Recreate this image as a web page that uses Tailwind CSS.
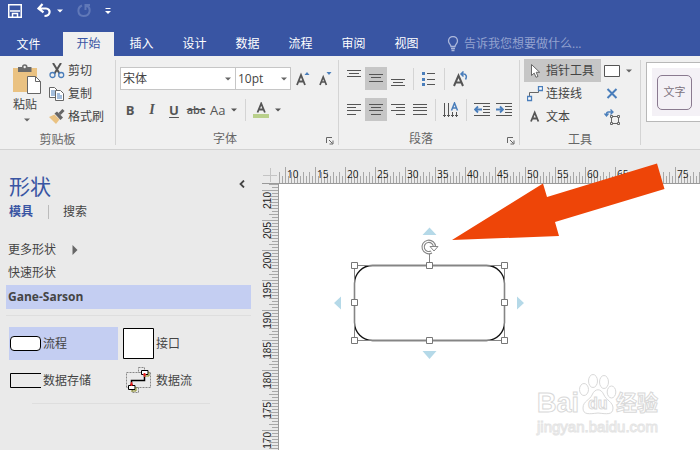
<!DOCTYPE html>
<html lang="zh-CN">
<head>
<meta charset="utf-8">
<meta name="viewport" content="width=device-width, initial-scale=1">
<title>Visio</title>
<script src="https://cdn.jsdelivr.net/npm/@tailwindcss/browser@4"></script>
</head>
<body class="flex min-h-screen flex-col overflow-hidden bg-[#eaeaea] font-['Open_Sans','Noto_Sans_CJK_SC',sans-serif] text-xs leading-4 text-[#444]">

<svg class="hidden" aria-hidden="true">
  <symbol id="caret" viewBox="0 0 6 4"><path d="M0 .5h6L3 3.5z" fill="currentColor"/></symbol>
  <symbol id="launcher" viewBox="0 0 8 8"><path d="M.5 6V.5H6M3 3l3.500 3.500M7 3.500V7H3.500" fill="none" stroke="currentColor"/></symbol>
</svg>

<header class="bg-[#3955a3] text-white">
  <div class="flex h-8 items-start pt-[3px] pl-2">
    <button aria-label="保存" class="h-4 w-[14px]"><svg class="h-4 w-[14px]" viewBox="0 0 14 16" fill="none" stroke="#fff" stroke-width="1.500"><path d="M.75 1.750h12.500v12.500H.75zM2 8h10M4.500 14v-3.500h5v3.500"/></svg></button>
    <button aria-label="撤消" class="ml-[15px] flex h-4 items-center gap-[6px]"><svg class="h-4 w-[14px]" viewBox="0 0 14 16" fill="none" stroke="#fff" stroke-width="2.200"><path d="M5.500 1 1.500 5.500l5 3.800M2 5.500h7c5 0 5 7.500-1.500 7.500"/></svg><svg class="h-1 w-[6px]"><use href="#caret"/></svg></button>
    <button aria-label="恢复" class="ml-[14px] h-4 w-[14px]"><svg class="h-4 w-[14px]" viewBox="0 0 14 16" fill="none" stroke="#6078b8" stroke-width="2"><path d="M5 2.500C0 4.500 0 12.500 6.500 13 13.500 13 14.500 5 9.500 2.500M8.500 7V2H13"/></svg></button>
    <button aria-label="自定义快速访问工具栏" class="ml-[14px] h-4 w-[6px]"><svg class="h-4 w-[6px]" viewBox="0 0 6 16"><path d="M.5 5.500h5" stroke="#fff"/><path d="M0 8h6L3 11z" fill="#fff"/></svg></button>
  </div>
  <div class="flex h-6 items-stretch">
    <nav class="flex gap-[2px]">
      <button class="w-[61px] pr-1 pt-px">文件</button>
      <button class="w-[51px] bg-[#f0f0f0] pb-px text-[#3955a3]">开始</button>
      <button class="w-[51px] pb-px">插入</button>
      <button class="w-[51px] pb-px">设计</button>
      <button class="w-[51px] pb-px">数据</button>
      <button class="w-[51px] pb-px">流程</button>
      <button class="w-[51px] pb-px">审阅</button>
      <button class="w-[51px] pb-px">视图</button>
    </nav>
    <label class="ml-[15px] flex min-w-0 flex-1 items-center gap-[5px]">
      <svg class="h-4 w-3 shrink-0" viewBox="0 0 12 16" fill="none" stroke="#aab6da" stroke-width="1.300"><path d="M4 10.500C4 8.500 1.500 7.500 1.500 5a4.500 4.500 0 0 1 9 0C10.500 7.500 8 8.500 8 10.500zM4 12.500h4M4.500 14.500h3"/></svg>
      <input aria-label="告诉我您想要做什么" placeholder="告诉我您想要做什么..." class="w-full min-w-0 bg-transparent outline-none placeholder:text-[#93a2cf]">
    </label>
  </div>
</header>

<section class="flex h-[94px] shrink-0 border-b border-[#d2d2d2] bg-[#f0f0f0]">
  <div class="flex w-[115px] shrink-0 flex-col pt-[3px]">
    <div class="flex h-[69px] gap-2 pl-3">
      <button class="flex flex-col items-start pt-[5px]">
        <svg class="h-[30px] w-[29px]" viewBox="0 0 29 30"><path d="M1 4h24v24H1z" fill="#eac282"/><path d="M6 8V3h4a2.500 2.500 0 0 1 5.500 0h4v5z" fill="#6a6a6a"/><circle cx="12.700" cy="3" r="1.200" fill="#f0f0f0"/><path d="M15.500 12.500h8l5 5v12h-13z" fill="#fff" stroke="#666"/><path d="M23.500 12.500v5h5" fill="none" stroke="#666"/></svg>
        <span class="mt-[3px] pl-px">粘贴</span>
        <svg class="ml-3 mt-[5px] h-1 w-[6px] text-[#666]"><use href="#caret"/></svg>
      </button>
      <div class="grid grid-rows-3">
        <button class="flex items-center gap-[3px]"><svg class="size-4" viewBox="0 0 16 16" fill="none"><path d="M4 0l6.500 10.500M12 0 5.500 10.500" stroke="#555" stroke-width="2"/><circle cx="3.500" cy="12" r="2.500" stroke="#4a7ebb" stroke-width="1.300"/><circle cx="12.200" cy="12" r="2.500" stroke="#4a7ebb" stroke-width="1.300"/></svg>剪切</button>
        <button class="flex items-center gap-[3px]"><svg class="size-4" viewBox="0 0 16 16" fill="#fff" stroke="#666"><path d="M.5 1.500h5l3 3v7h-8z"/><path d="M2 5h4M2 7h4M2 9h4" stroke="#4a7ebb"/><path d="M6.500 4.500h5l3 3v7h-8z"/><path d="M8 8h3M8 10h5M8 12h5" stroke="#4a7ebb"/></svg>复制</button>
        <button class="flex items-center gap-[3px]"><svg class="size-4" viewBox="0 0 16 16"><path d="m0 8 5.500-2.500 5 5L7 15z" fill="#eac282"/><path d="m5.500 4.500 2.500-2 6 6-2.500 2.500z" fill="#666"/><path d="m10.500 5 4-4" stroke="#666" stroke-width="3"/></svg>格式刷</button>
      </div>
    </div>
    <div class="pt-1 text-center text-[#666]">剪贴板</div>
  </div>
  <div class="my-1 w-px shrink-0 bg-[#d4d4d4]"></div>

  <div class="flex w-[222px] shrink-0 flex-col pt-[11px]">
    <div class="flex h-[23px] items-center pl-1">
      <label class="relative"><select aria-label="字体" class="block h-[23px] w-[116px] appearance-none border border-[#c6c6c6] bg-white pl-[2px]"><option>宋体</option></select><svg class="pointer-events-none absolute top-[10px] right-[5px] h-1 w-[6px] text-[#666]"><use href="#caret"/></svg></label>
      <label class="relative -ml-px"><select aria-label="字号" class="block h-[23px] w-14 appearance-none border border-[#c6c6c6] bg-white pl-[2px]"><option>10pt</option></select><svg class="pointer-events-none absolute top-[10px] right-1 h-1 w-[6px] text-[#666]"><use href="#caret"/></svg></label>
      <button aria-label="增大字号" class="ml-[5px] h-4 w-[14px]"><svg class="h-4 w-[14px]" viewBox="0 0 14 16"><path d="m1 14 4-10 4 10M2.500 10.500h5" fill="none" stroke="#555" stroke-width="1.800"/><path d="M8.500 4h5l-2.500-3z" fill="#4a7ebb"/></svg></button>
      <button aria-label="减小字号" class="ml-[9px] h-4 w-[14px]"><svg class="h-4 w-[14px]" viewBox="0 0 14 16"><path d="m1 14 3.200-8 3.200 8M2.500 11h3.500" fill="none" stroke="#555" stroke-width="1.700"/><path d="M7.500 1h5L10 4z" fill="#4a7ebb"/></svg></button>
    </div>
    <div class="mt-2 flex h-[23px] items-center pl-[3px] text-[13px] text-[#555]">
      <button class="w-[22px] font-bold">B</button>
      <button class="w-[22px] font-['Liberation_Serif',serif] text-sm font-bold italic">I</button>
      <button class="w-[22px] font-bold underline underline-offset-2">U</button>
      <button class="w-[22px] text-[11px] font-semibold line-through">abc</button>
      <button class="ml-[3px] flex items-center gap-[6px]">Aa<svg class="h-1 w-[6px]"><use href="#caret"/></svg></button>
      <span class="ml-2 h-[22px] w-px bg-[#d4d4d4]"></span>
      <button aria-label="字体颜色" class="ml-[7px] flex items-center gap-[6px]"><svg class="size-4" viewBox="0 0 16 16"><path d="m4.500 10.500 3.700-9 3.700 9M6 7.500h4.500" fill="none" stroke="#555" stroke-width="1.800"/><path d="M0 12h16v4H0z" fill="#b9d08b"/></svg><svg class="h-1 w-[6px]"><use href="#caret"/></svg></button>
    </div>
    <div class="relative pt-[10px] pr-1 text-center text-[#666]">字体<button aria-label="字体设置" class="absolute top-4 right-1 size-2"><svg class="size-2"><use href="#launcher"/></svg></button></div>
  </div>
  <div class="my-1 w-px shrink-0 bg-[#d4d4d4]"></div>

  <div class="flex w-[180px] shrink-0 flex-col pt-[11px]">
    <div class="flex h-[23px] items-center pl-1">
      <button aria-label="顶端对齐" class="flex h-[23px] w-[22px] justify-center"><svg class="h-[23px] w-[14px]" viewBox="0 0 14 23" stroke="#555"><path d="M0 3.500h14M2 6.500h10M0 9.500h14"/></svg></button>
      <button aria-label="中部对齐" class="flex h-[23px] w-[22px] justify-center bg-[#c6c6c6]"><svg class="h-[23px] w-[14px]" viewBox="0 0 14 23" stroke="#555"><path d="M0 7.500h14M2 10.500h10M0 14.500h14"/></svg></button>
      <button aria-label="底端对齐" class="flex h-[23px] w-[22px] justify-center"><svg class="h-[23px] w-[14px]" viewBox="0 0 14 23" stroke="#555"><path d="M0 12.500h14M2 15.500h10M0 18.500h14"/></svg></button>
      <span class="ml-1 h-[22px] w-px bg-[#d4d4d4]"></span>
      <button aria-label="项目符号" class="ml-2 w-[14px]"><svg class="size-[14px]" viewBox="0 0 14 14"><path d="M5 1.500h8M5 7.500h8M5 12.500h8" stroke="#555"/><path d="M0 0h3v3H0zM0 6h3v3H0zM0 11h3v3H0z" fill="#4a7ebb"/></svg></button>
      <span class="ml-2 h-[22px] w-px bg-[#d4d4d4]"></span>
      <button aria-label="旋转文本" class="ml-2 w-[15px]"><svg class="h-4 w-[15px]" viewBox="0 0 15 16" fill="none"><path d="m1 15 4.500-10.500L10 15M2.800 11.500h5.500" stroke="#555" stroke-width="2"/><path d="M8.500 3h2c3 0 3.500 3 2 5.500M10.500.5 8 3l2.500 2.500" stroke="#4a7ebb" stroke-width="1.500"/></svg></button>
    </div>
    <div class="mt-2 flex h-[23px] items-center pl-1">
      <button aria-label="左对齐" class="flex h-[23px] w-[22px] justify-center"><svg class="h-[23px] w-[14px]" viewBox="0 0 14 23" stroke="#555"><path d="M0 6.500h14M0 9.500h9M0 12.500h14M0 16.500h9"/></svg></button>
      <button aria-label="居中" class="flex h-[23px] w-[22px] justify-center bg-[#c6c6c6]"><svg class="h-[23px] w-[14px]" viewBox="0 0 14 23" stroke="#555"><path d="M0 6.500h14M2 9.500h10M0 12.500h14M2 16.500h10"/></svg></button>
      <button aria-label="右对齐" class="flex h-[23px] w-[22px] justify-center"><svg class="h-[23px] w-[14px]" viewBox="0 0 14 23" stroke="#555"><path d="M0 6.500h14M5 9.500h9M0 12.500h14M5 16.500h9"/></svg></button>
      <button aria-label="两端对齐" class="flex h-[23px] w-[22px] justify-center"><svg class="h-[23px] w-[14px]" viewBox="0 0 14 23" stroke="#555"><path d="M0 6.500h14M0 9.500h14M0 12.500h14M0 16.500h14"/></svg></button>
      <span class="ml-1 h-[22px] w-px bg-[#d4d4d4]"></span>
      <button aria-label="文字方向" class="ml-[7px] w-4"><svg class="size-4" viewBox="0 0 16 16" fill="none"><path d="M1.500 1v14M5.500 1v14M9.500 10v5M13.500 10v5M0 13.500h3M4 13.500h3M8 13.500h3M12 13.500h3" stroke="#555"/><path d="m8.500 8.500 3-7.500 3 7.500M9.500 6h4" stroke="#4a7ebb" stroke-width="1.500"/></svg></button>
      <span class="ml-[7px] h-[22px] w-px bg-[#d4d4d4]"></span>
      <button aria-label="减少缩进" class="ml-[7px] w-4"><svg class="size-4" viewBox="0 0 16 16" fill="none"><path d="M0 1.500h16M9 4.500h7M9 7.500h7M9 10.500h7M0 13.500h16" stroke="#555"/><path d="M8 7.500H1.500M4 4.500l-3 3 3 3" stroke="#4a7ebb" stroke-width="1.800"/></svg></button>
      <button aria-label="增加缩进" class="ml-[6px] w-4"><svg class="size-4" viewBox="0 0 16 16" fill="none"><path d="M0 1.500h16M9 4.500h7M9 7.500h7M9 10.500h7M0 13.500h16" stroke="#555"/><path d="M0 7.500h6.500M4 4.500l3 3-3 3" stroke="#4a7ebb" stroke-width="1.800"/></svg></button>
    </div>
    <div class="relative pt-[10px] pr-4 text-center text-[#666]">段落<button aria-label="段落设置" class="absolute top-4 right-1 size-2"><svg class="size-2"><use href="#launcher"/></svg></button></div>
  </div>
  <div class="my-1 w-px shrink-0 bg-[#d4d4d4]"></div>

  <div class="flex w-[120px] shrink-0 flex-col pt-[3px]">
    <div class="flex h-[69px] gap-[3px] pl-1">
      <div class="grid w-[77px] grid-rows-3">
        <button class="flex items-center gap-[3px] bg-[#c6c6c6] pl-[3px]"><svg class="size-4" viewBox="0 0 16 16"><path d="M4.500 1.500v11l2.700-2.400 1.800 4.200 2-.9-1.800-4.100h3.500z" fill="#fff" stroke="#666"/></svg>指针工具</button>
        <button class="flex items-center gap-[3px] pl-[3px]"><svg class="size-4" viewBox="0 0 16 16" fill="#fff"><path d="M2.500 11V6.500h9V4" fill="none" stroke="#666"/><path d="M.5 10.500h4v4h-4zM11.500.5h4v4h-4z" stroke="#4a7ebb" stroke-width="1.300"/></svg>连接线</button>
        <button class="flex items-center gap-[3px] pl-[3px]"><svg class="size-4" viewBox="0 0 16 16"><path d="m4 12.500 3.700-9 3.700 9M5.500 9.500H10" fill="none" stroke="#555" stroke-width="1.800"/></svg>文本</button>
      </div>
      <div class="grid grid-rows-3">
        <button aria-label="矩形" class="flex items-center gap-[6px]"><svg class="h-3 w-4" viewBox="0 0 16 12"><path d="M.5.5h15v11H.5z" fill="#fff" stroke="#555"/></svg><svg class="h-1 w-[6px] text-[#666]"><use href="#caret"/></svg></button>
        <button aria-label="连接点" class="flex items-center"><svg class="size-4" viewBox="0 0 16 16"><path d="m3.500 3 9 9M12.500 3l-9 9" stroke="#4a7ebb" stroke-width="2"/></svg></button>
        <button aria-label="文本块" class="flex items-center"><svg class="size-4" viewBox="0 0 16 16" fill="none"><path d="M2.500 7V5q0-2 2-2h4M.5 4.500l2 2.500 2-2.500M6.500.5 9 3 6.500 5.500" stroke="#4a7ebb" stroke-width="1.300"/><path d="M7.500 7.500h7v7h-7z" fill="#f0f0f0" stroke="#666"/><path d="M6.500 6.500h2v2h-2zM13.500 6.500h2v2h-2zM6.500 13.500h2v2h-2zM13.500 13.500h2v2h-2z" fill="#f0f0f0" stroke="#666"/></svg></button>
      </div>
    </div>
    <div class="pt-1 text-center text-[#666]">工具</div>
  </div>
  <div class="my-1 w-px shrink-0 bg-[#d4d4d4]"></div>

  <div class="min-w-0 flex-1 pt-[6px] pl-[5px]">
    <div class="flex h-[60px] items-center border border-r-0 border-[#b8b8b8] bg-white pl-[5px]">
      <button class="flex h-12 flex-1 items-center bg-[#f4f1f6] pl-[5px]"><span class="flex size-[35px] items-center justify-center rounded-[5px] border border-[#8a7a90] text-[11px] text-[#7c7280]">文字</span></button>
    </div>
  </div>
</section>

<main class="flex flex-1">
  <aside class="w-[262px] shrink-0 pt-[22px]">
    <div class="flex h-7 items-start justify-between pr-[17px] pl-[9px]">
      <h1 class="text-[21px] leading-7 text-[#3955a3]">形状</h1>
      <button aria-label="折叠" class="mt-2"><svg class="h-2 w-[6px]" viewBox="0 0 6 8"><path d="M5 .5 1.500 4 5 7.500" fill="none" stroke="#444" stroke-width="1.800"/></svg></button>
    </div>
    <div class="mt-1 flex h-4 items-center pl-[9px]">
      <button class="font-bold text-[#3955a3]">模具</button>
      <span class="ml-[15px] h-[14px] w-px bg-[#bbb]"></span>
      <button class="ml-[14px]">搜索</button>
    </div>
    <button class="mt-[18px] flex h-[23px] items-center gap-4 pl-2">更多形状<svg class="h-[10px] w-[6px]" viewBox="0 0 6 10"><path d="M.5 0 5.500 5l-5 5z" fill="#666"/></svg></button>
    <button class="flex h-[23px] items-center pl-2">快速形状</button>
    <div class="mt-px mr-[11px] ml-[6px]">
      <h2 class="h-6 bg-[#c4cef2] pl-[2px] leading-6 font-bold">Gane-Sarson</h2>
      <div class="mt-[6px] h-px bg-[#dedede]"></div>
    </div>
    <div class="mt-[11px] grid grid-cols-[109px_109px] gap-x-1 gap-y-1 pl-[9px]">
      <button class="flex h-[33px] items-center gap-[2px] bg-[#c4cef2] pl-px"><svg class="h-[15px] w-[31px]" viewBox="0 0 31 15"><rect x=".5" y=".5" width="30" height="14" rx="3.500" fill="#fff" stroke="#000"/></svg>流程</button>
      <button class="flex h-[33px] items-center gap-[2px] pl-px"><svg class="size-[31px]" viewBox="0 0 31 31"><path d="M.5.5h30v30H.5z" fill="#fff" stroke="#000"/></svg>接口</button>
      <button class="flex h-[33px] items-center gap-[2px] pl-px"><svg class="h-[15px] w-[31px]" viewBox="0 0 31 15"><path d="M31 .5H.5v14H31" fill="none" stroke="#000"/></svg>数据存储</button>
      <button class="flex h-[33px] items-center gap-[2px] pl-px"><svg class="h-[27px] w-[31px]" viewBox="0 0 31 27" fill="none"><path d="M3.500 5.500h24v15h-24zM15.500.5h6v5h-6zM9.500 20.500h6v5h-6z" stroke="#888" stroke-dasharray="2 1"/><path d="M8.500 19v-5.500h13V8" stroke="#000" stroke-width="1.500"/><path d="M18.500 3.500h6.500v4h-6.500zM5.500 18.500H12V22.500H5.500z" fill="#fff" stroke="#000"/><path d="M26 5v4h-5M13 20v4H8" stroke="#8a8a20"/><path d="M20 7.500h3M21.500 6v4M7 17.500h3M8.500 15v4" stroke="#e02020" stroke-width="1.300"/></svg>数据流</button>
    </div>
    <div class="mt-[6px] mr-[52px] ml-8 h-px bg-[#dedede]"></div>
  </aside>

  <section class="relative flex min-w-0 flex-1 flex-col pt-[17px]">
    <div class="flex h-[17px] shrink-0">
      <svg class="h-[17px] w-[17px] shrink-0" viewBox="0 0 17 17" stroke="#c4c4c4"><path d="M1 8.500h14M8.500 1v14"/><path d="M0 16.500h17" stroke="#999"/></svg>
      <div class="relative min-w-0 flex-1 overflow-hidden border-b border-[#999]">
        <svg class="absolute inset-0 h-4 w-full" aria-hidden="true">
          <pattern id="hticks" x="6" y="0" width="30" height="16" patternUnits="userSpaceOnUse"><path d="M.5 0v16M6.500 5v11M12.500 5v11M18.500 5v11M24.500 5v11M3.500 9v7M9.500 9v7M15.500 9v7M21.500 9v7M27.500 9v7" stroke="#a8a8a8"/></pattern>
          <rect width="100%" height="100%" fill="url(#hticks)"/>
        </svg>
        <div class="relative flex pl-2 text-[10px] leading-[14px] text-[#222]">
          <span class="w-[30px] shrink-0">10</span><span class="w-[30px] shrink-0">15</span><span class="w-[30px] shrink-0">20</span><span class="w-[30px] shrink-0">25</span><span class="w-[30px] shrink-0">30</span><span class="w-[30px] shrink-0">35</span><span class="w-[30px] shrink-0">40</span><span class="w-[30px] shrink-0">45</span><span class="w-[30px] shrink-0">50</span><span class="w-[30px] shrink-0">55</span><span class="w-[30px] shrink-0">60</span><span class="w-[30px] shrink-0">65</span><span class="w-[30px] shrink-0">70</span><span class="w-[30px] shrink-0">75</span>
        </div>
      </div>
    </div>
    <div class="flex flex-1">
      <div class="relative w-[17px] shrink-0 border-r border-[#999]">
        <svg class="absolute inset-0 h-full w-4" aria-hidden="true">
          <pattern id="vticks" x="0" y="6" width="16" height="30" patternUnits="userSpaceOnUse"><path d="M0 .5h16M7 6.500h9M7 12.500h9M7 18.500h9M7 24.500h9M10 3.500h6M10 9.500h6M10 15.500h6M10 21.500h6M10 27.500h6" stroke="#a8a8a8"/></pattern>
          <rect width="100%" height="100%" fill="url(#vticks)"/>
        </svg>
        <div class="absolute top-2 left-0 font-['Liberation_Sans',sans-serif] text-[10px] leading-3 text-[#222]">
          <div class="h-[30px]"><span class="block rotate-180 [writing-mode:vertical-rl]">210</span></div>
          <div class="h-[30px]"><span class="block rotate-180 [writing-mode:vertical-rl]">205</span></div>
          <div class="h-[30px]"><span class="block rotate-180 [writing-mode:vertical-rl]">200</span></div>
          <div class="h-[30px]"><span class="block rotate-180 [writing-mode:vertical-rl]">195</span></div>
          <div class="h-[30px]"><span class="block rotate-180 [writing-mode:vertical-rl]">190</span></div>
          <div class="h-[30px]"><span class="block rotate-180 [writing-mode:vertical-rl]">185</span></div>
          <div class="h-[30px]"><span class="block rotate-180 [writing-mode:vertical-rl]">180</span></div>
          <div class="h-[30px]"><span class="block rotate-180 [writing-mode:vertical-rl]">175</span></div>
          <div><span class="block rotate-180 [writing-mode:vertical-rl]">170</span></div>
        </div>
      </div>
      <div class="relative min-w-0 flex-1 bg-white">
        <!-- selected process shape with its handles -->
        <svg class="absolute top-[36px] left-[51px] h-[144px] w-[200px]" viewBox="330 220 200 144">
          <rect x="354.500" y="265.500" width="150" height="75" rx="18" fill="#fff" stroke="#111" stroke-width="1.300"/>
          <path d="M354.500 265.500h150v75h-150zM429.500 265v-11" fill="none" stroke="#858585"/>
          <g fill="#b5d9e8"><path d="M422.500 235 429.500 227.500 436.500 235zM422.500 351h14L429.500 359zM341 296.500v13L334 303zM517 296.500v13L524 303z"/></g>
          <g fill="#fff" stroke="#777"><path d="M351.500 262.500h6v6h-6zM426.500 262.500h6v6h-6zM501.500 262.500h6v6h-6zM351.500 299.500h6v6h-6zM501.500 299.500h6v6h-6zM351.500 337.500h6v6h-6zM426.500 337.500h6v6h-6zM501.500 337.500h6v6h-6z"/></g>
          <path d="M431.500 252A5.700 5.700 0 1 1 434.500 247" fill="none" stroke="#858585" stroke-width="3.400"/>
          <path d="M431.500 252A5.700 5.700 0 1 1 434.500 247" fill="none" stroke="#fff" stroke-width="1.200"/>
          <path d="M430 246.500h8l-4 4.500z" fill="#fff" stroke="#858585"/>
        </svg>
      </div>
    </div>
    <svg class="pointer-events-none absolute top-[10px] left-[188px] h-[84px] w-[220px]" viewBox="450 160 220 84"><path d="M452 240 543 183.500 547 197 657 163.500 664.500 189 555 222 559 236z" fill="#ee4508"/></svg>
    <svg class="pointer-events-none absolute top-[220px] left-[272px] h-[68px] w-[132px]" viewBox="534 370 132 68" fill="#fff" stroke="#d9d9d9" font-family="Liberation Sans, Noto Sans CJK SC, sans-serif" font-weight="bold">
      <ellipse cx="584" cy="389.500" rx="4.500" ry="6"/><ellipse cx="593" cy="381" rx="4.500" ry="6.500"/><ellipse cx="604" cy="382" rx="4.500" ry="6.500"/><ellipse cx="611.500" cy="392" rx="4.300" ry="6"/>
      <path d="M583 408c0-7 7-8 9-13 3-7 9-7 12 0 2 5 9 7 9 13 0 7-6 6-15 5-9 1-15 2-15-5z"/>
      <text x="537" y="412" font-size="27">Bai</text>
      <text x="588" y="409" font-size="16">du</text>
      <text x="616" y="410" font-size="21">经验</text>
      <text x="537" y="432" font-size="15" font-weight="normal" stroke="#e4e4e4">jingyan.baidu.com</text>
    </svg>
  </section>
</main>
</body>
</html>
